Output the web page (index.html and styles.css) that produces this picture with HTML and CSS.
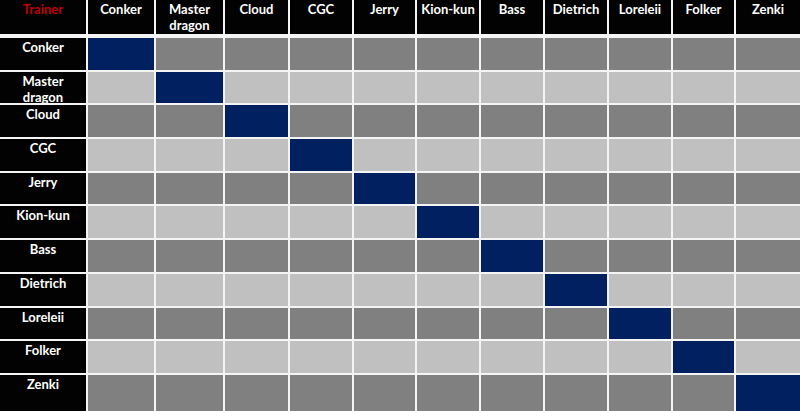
FILE: index.html
```html
<!DOCTYPE html>
<html>
<head>
<meta charset="utf-8">
<link rel="stylesheet" href="styles.css">
</head>
<body>
<div class="sheet">
  <div class="grid head">
    <div class="hcell trainer">Trainer</div>
    <div class="hcell">Conker</div>
    <div class="hcell">Master dragon</div>
    <div class="hcell">Cloud</div>
    <div class="hcell">CGC</div>
    <div class="hcell">Jerry</div>
    <div class="hcell">Kion-kun</div>
    <div class="hcell">Bass</div>
    <div class="hcell">Dietrich</div>
    <div class="hcell">Loreleii</div>
    <div class="hcell">Folker</div>
    <div class="hcell">Zenki</div>
  </div>
  <div class="grid body">
    <div class="label">Conker</div><div class="c hit"></div><div class="c dk"></div><div class="c dk"></div><div class="c dk"></div><div class="c dk"></div><div class="c dk"></div><div class="c dk"></div><div class="c dk"></div><div class="c dk"></div><div class="c dk"></div><div class="c dk"></div>
    <div class="label">Master dragon</div><div class="c lt"></div><div class="c hit"></div><div class="c lt"></div><div class="c lt"></div><div class="c lt"></div><div class="c lt"></div><div class="c lt"></div><div class="c lt"></div><div class="c lt"></div><div class="c lt"></div><div class="c lt"></div>
    <div class="label">Cloud</div><div class="c dk"></div><div class="c dk"></div><div class="c hit"></div><div class="c dk"></div><div class="c dk"></div><div class="c dk"></div><div class="c dk"></div><div class="c dk"></div><div class="c dk"></div><div class="c dk"></div><div class="c dk"></div>
    <div class="label">CGC</div><div class="c lt"></div><div class="c lt"></div><div class="c lt"></div><div class="c hit"></div><div class="c lt"></div><div class="c lt"></div><div class="c lt"></div><div class="c lt"></div><div class="c lt"></div><div class="c lt"></div><div class="c lt"></div>
    <div class="label">Jerry</div><div class="c dk"></div><div class="c dk"></div><div class="c dk"></div><div class="c dk"></div><div class="c hit"></div><div class="c dk"></div><div class="c dk"></div><div class="c dk"></div><div class="c dk"></div><div class="c dk"></div><div class="c dk"></div>
    <div class="label">Kion-kun</div><div class="c lt"></div><div class="c lt"></div><div class="c lt"></div><div class="c lt"></div><div class="c lt"></div><div class="c hit"></div><div class="c lt"></div><div class="c lt"></div><div class="c lt"></div><div class="c lt"></div><div class="c lt"></div>
    <div class="label">Bass</div><div class="c dk"></div><div class="c dk"></div><div class="c dk"></div><div class="c dk"></div><div class="c dk"></div><div class="c dk"></div><div class="c hit"></div><div class="c dk"></div><div class="c dk"></div><div class="c dk"></div><div class="c dk"></div>
    <div class="label">Dietrich</div><div class="c lt"></div><div class="c lt"></div><div class="c lt"></div><div class="c lt"></div><div class="c lt"></div><div class="c lt"></div><div class="c lt"></div><div class="c hit"></div><div class="c lt"></div><div class="c lt"></div><div class="c lt"></div>
    <div class="label">Loreleii</div><div class="c dk"></div><div class="c dk"></div><div class="c dk"></div><div class="c dk"></div><div class="c dk"></div><div class="c dk"></div><div class="c dk"></div><div class="c dk"></div><div class="c hit"></div><div class="c dk"></div><div class="c dk"></div>
    <div class="label">Folker</div><div class="c lt"></div><div class="c lt"></div><div class="c lt"></div><div class="c lt"></div><div class="c lt"></div><div class="c lt"></div><div class="c lt"></div><div class="c lt"></div><div class="c lt"></div><div class="c hit"></div><div class="c lt"></div>
    <div class="label">Zenki</div><div class="c dk"></div><div class="c dk"></div><div class="c dk"></div><div class="c dk"></div><div class="c dk"></div><div class="c dk"></div><div class="c dk"></div><div class="c dk"></div><div class="c dk"></div><div class="c dk"></div><div class="c hit"></div>
  </div>
</div>
</body>
</html>
```

FILE: styles.css
```css
html, body {
  margin: 0;
  padding: 0;
  background: #f4f4f4;
}
.sheet {
  width: 800px;
  height: 411px;
  display: flex;
  flex-direction: column;
  gap: 4px;
  overflow: hidden;
  font-family: "Lato", "Open Sans", sans-serif;
  font-weight: 700;
  font-size: 13px;
  line-height: 16px;
  color: #ffffff;
}
.grid {
  display: grid;
  grid-template-columns: 86px 66px 67px 63px 62px 61px 62px 62px 62px 62px 61px 64px;
  column-gap: 2px;
}
.head {
  height: 34px;
  flex: none;
}
.body {
  flex: 1;
  grid-template-rows: repeat(10, 31.7px) 1fr;
  row-gap: 2px;
}
.hcell {
  background: #020202;
  text-align: center;
  padding-top: 1px;
}
.hcell.trainer {
  color: #c00000;
}
.label {
  background: #020202;
  text-align: center;
  padding: 1px 12px 0;
}
.c.dk { background: #808080; }
.c.lt { background: #c0c0c0; }
.c.hit { background: #002060; }
```
